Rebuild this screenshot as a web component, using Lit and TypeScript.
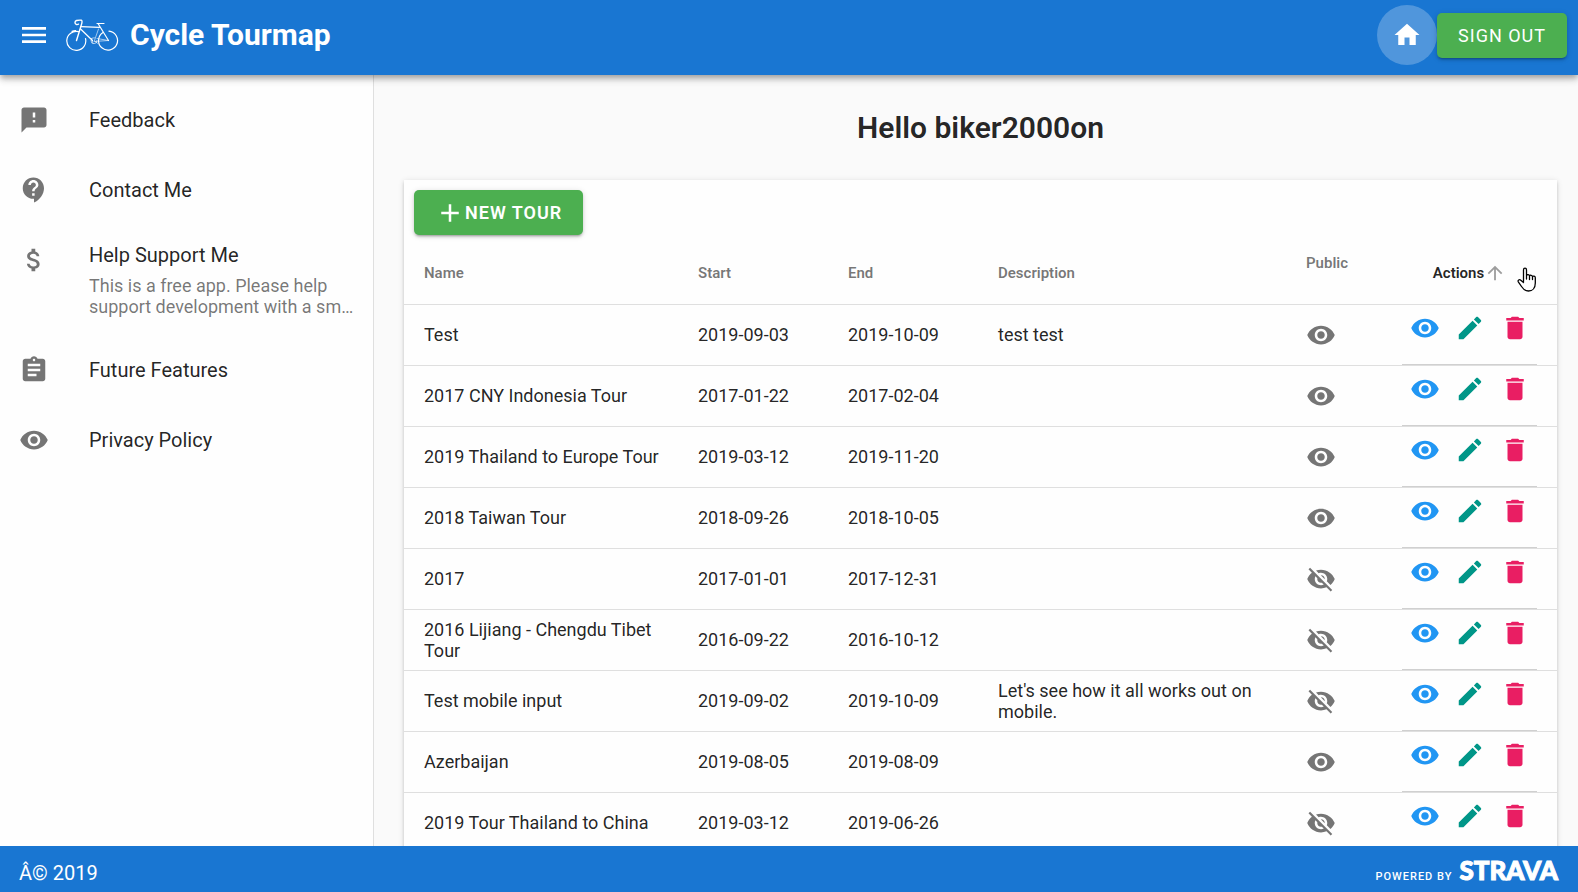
import { LitElement, html, css, svg } from "lit";
import { customElement, property } from "lit/decorators.js";

const ICONS: Record<string, string> = {
  menu: "M3 18h18v-2H3v2zm0-5h18v-2H3v2zm0-7v2h18V6H3z",
  home: "M10 20v-6h4v6h5v-8h3L12 3 2 12h3v8z",
  feedback:
    "M20 2H4c-1.1 0-1.99.9-1.99 2L2 22l4-4h14c1.1 0 2-.9 2-2V4c0-1.1-.9-2-2-2zm-7 12h-2v-2h2v2zm0-4h-2V6h2v4z",
  contact:
    "M11.5 2C6.81 2 3 5.81 3 10.5S6.81 19 11.5 19h.5v3c4.86-2.34 8-7 8-11.5C20 5.81 16.19 2 11.5 2zm1 14.5h-2v-2h2v2zm0-3.5h-2c0-3.25 3-3 3-5 0-1.100-.9-2-2-2s-2 .9-2 2h-2c0-2.210 1.790-4 4-4s4 1.790 4 4c0 2.500-3 2.750-3 5z",
  money:
    "M11.8 10.9c-2.27-.59-3-1.200-3-2.150 0-1.090 1.010-1.850 2.700-1.850 1.780 0 2.440.85 2.500 2.100h2.210c-.07-1.720-1.120-3.300-3.210-3.810V3h-3v2.160c-1.940.42-3.500 1.680-3.500 3.610 0 2.310 1.910 3.460 4.700 4.130 2.500.6 3 1.480 3 2.410 0 .69-.49 1.790-2.700 1.790-2.060 0-2.870-.92-2.980-2.100h-2.200c.12 2.190 1.760 3.420 3.680 3.830V21h3v-2.150c1.950-.37 3.500-1.500 3.500-3.550 0-2.840-2.430-3.810-4.700-4.400z",
  assignment:
    "M19 3h-4.180C14.400 1.840 13.300 1 12 1c-1.300 0-2.400.84-2.820 2H5c-1.100 0-2 .9-2 2v14c0 1.100.9 2 2 2h14c1.100 0 2-.9 2-2V5c0-1.100-.9-2-2-2zm-7 0c.55 0 1 .45 1 1s-.45 1-1 1-1-.45-1-1 .45-1 1-1zm2 14H7v-2h7v2zm3-4H7v-2h10v2zm0-4H7V7h10v2z",
  eye: "M12 4.500C7 4.500 2.730 7.610 1 12c1.730 4.390 6 7.500 11 7.500s9.270-3.110 11-7.500c-1.730-4.390-6-7.500-11-7.500zM12 17c-2.760 0-5-2.240-5-5s2.240-5 5-5 5 2.240 5 5-2.240 5-5 5zm0-8c-1.660 0-3 1.340-3 3s1.340 3 3 3 3-1.340 3-3-1.340-3-3-3z",
  eyeOff:
    "M12 7c2.760 0 5 2.240 5 5 0 .65-.13 1.260-.36 1.830l2.920 2.920c1.510-1.260 2.700-2.890 3.430-4.750-1.730-4.390-6-7.500-11-7.500-1.400 0-2.740.25-3.980.7l2.160 2.160C10.740 7.130 11.350 7 12 7zM2 4.270l2.280 2.280.46.46C3.080 8.300 1.780 10.020 1 12c1.730 4.390 6 7.500 11 7.500 1.550 0 3.030-.3 4.380-.84l.42.42L19.730 22 21 20.730 3.270 3 2 4.270zM7.530 9.800l1.550 1.550c-.05.21-.08.43-.08.65 0 1.660 1.340 3 3 3 .22 0 .44-.03.65-.08l1.550 1.550c-.67.33-1.410.53-2.200.53-2.760 0-5-2.240-5-5 0-.79.2-1.530.53-2.200zm4.310-.78l3.150 3.150.02-.16c0-1.660-1.340-3-3-3l-.17.01z",
  edit: "M3 17.250V21h3.750L17.810 9.940l-3.750-3.750L3 17.250zM20.710 7.040c.39-.39.39-1.020 0-1.410l-2.340-2.340c-.39-.39-1.020-.39-1.410 0l-1.830 1.830 3.750 3.750 1.830-1.830z",
  trash: "M6 19c0 1.100.9 2 2 2h8c1.100 0 2-.9 2-2V7H6v12zM19 4h-3.500l-1-1h-5l-1 1H5v2h14V4z",
  plus: "M19 13h-6v6h-2v-6H5v-2h6V5h2v6h6v2z",
  arrowUp: "M4 12l1.410 1.410L11 7.830V20h2V7.830l5.580 5.590L20 12l-8-8-8 8z",
};

@customElement("md-icon")
class MdIcon extends LitElement {
  @property() name = "";

  static styles = css`
    :host {
      display: inline-flex;
      flex: none;
      width: 30px;
      height: 30px;
    }
    .glyph {
      width: 100%;
      height: 100%;
      fill: currentColor;
    }
  `;

  render() {
    return html`<svg class="glyph" viewBox="0 0 24 24" aria-hidden="true">
      ${svg`<path d=${ICONS[this.name] ?? ""}></path>`}
    </svg>`;
  }
}

interface NavItem {
  icon: string;
  title: string;
  note?: string;
}

const NAV: NavItem[] = [
  { icon: "feedback", title: "Feedback" },
  { icon: "contact", title: "Contact Me" },
  {
    icon: "money",
    title: "Help Support Me",
    note: "This is a free app. Please help support development with a sm…",
  },
  { icon: "assignment", title: "Future Features" },
  { icon: "eye", title: "Privacy Policy" },
];

interface Tour {
  name: string;
  start: string;
  end: string;
  description: string;
  isPublic: boolean;
}

const tour = (name: string, start: string, end: string, isPublic: boolean, description = ""): Tour => ({
  name,
  start,
  end,
  description,
  isPublic,
});

const TOURS: Tour[] = [
  tour("Test", "2019-09-03", "2019-10-09", true, "test test"),
  tour("2017 CNY Indonesia Tour", "2017-01-22", "2017-02-04", true),
  tour("2019 Thailand to Europe Tour", "2019-03-12", "2019-11-20", true),
  tour("2018 Taiwan Tour", "2018-09-26", "2018-10-05", true),
  tour("2017", "2017-01-01", "2017-12-31", false),
  tour("2016 Lijiang - Chengdu Tibet Tour", "2016-09-22", "2016-10-12", false),
  tour("Test mobile input", "2019-09-02", "2019-10-09", false, "Let's see how it all works out on mobile."),
  tour("Azerbaijan", "2019-08-05", "2019-08-09", true),
  tour("2019 Tour Thailand to China", "2019-03-12", "2019-06-26", false),
];

@customElement("app-root")
class AppRoot extends LitElement {
  static styles = css`
    :host {
      display: grid;
      grid-template-rows: auto minmax(0, 1fr) auto;
      height: 100vh;
      font-family: Roboto, sans-serif;
      color: rgba(0, 0, 0, 0.87);
      background: #fafafa;
    }
    * {
      box-sizing: border-box;
    }
    button {
      font: inherit;
      border: 0;
      margin: 0;
      padding: 0;
      background: none;
      color: inherit;
      cursor: pointer;
    }

    .bar {
      display: flex;
      align-items: center;
      height: 75px;
      padding: 0 11px 5px 18px;
      background: #1976d2;
      color: #fff;
      z-index: 2;
      box-shadow: 0 3px 5px -1px rgba(0, 0, 0, 0.2), 0 5px 6px rgba(0, 0, 0, 0.14),
        0 1px 12px rgba(0, 0, 0, 0.12);
    }
    .menu {
      display: flex;
    }
    .menu md-icon {
      width: 32px;
      height: 32px;
    }
    .bike {
      width: 54px;
      height: 33px;
      margin-left: 15px;
      fill: none;
      stroke: #fff;
      stroke-linecap: round;
      stroke-linejoin: round;
    }
    .brand {
      margin: 0 auto 0 11px;
      font-size: 30px;
      line-height: 40px;
      font-weight: 700;
    }
    .home {
      display: flex;
      align-items: center;
      justify-content: center;
      width: 60px;
      height: 60px;
      border-radius: 50%;
      color: #fff;
      background: rgba(255, 255, 255, 0.24);
    }
    .green {
      display: inline-flex;
      align-items: center;
      height: 45px;
      padding: 0 21px;
      border-radius: 5px;
      background: #4caf50;
      color: #fff;
      font-size: 18px;
      font-weight: 600;
      letter-spacing: 1px;
      text-transform: uppercase;
      box-shadow: 0 3px 2px -2px rgba(0, 0, 0, 0.2), 0 2px 3px rgba(0, 0, 0, 0.14),
        0 1px 6px rgba(0, 0, 0, 0.12);
    }
    .light {
      font-weight: 400;
    }

    .body {
      display: grid;
      grid-template-columns: 374px minmax(0, 1fr);
      min-height: 0;
    }
    .side {
      padding-top: 10px;
      background: #fefefe;
      border-right: 1px solid rgba(0, 0, 0, 0.12);
    }
    .item {
      display: flex;
      align-items: center;
      gap: 40px;
      min-height: 70px;
      padding: 0 10px 0 19px;
      color: inherit;
      text-decoration: none;
    }
    .item md-icon {
      color: #757575;
    }
    .tall {
      align-items: flex-start;
      height: 110px;
      padding-top: 18px;
    }
    .tall md-icon {
      margin-top: 2px;
    }
    .label {
      display: block;
      font-size: 20px;
      line-height: 24px;
    }
    .note {
      display: block;
      margin-top: 8px;
      font-size: 18px;
      line-height: 21px;
      color: rgba(0, 0, 0, 0.54);
    }

    .main {
      overflow: hidden auto;
      scrollbar-width: none;
      padding: 31px 21px 0 30px;
    }
    .hello {
      margin: 0 0 30px;
      font-size: 30px;
      line-height: 44px;
      font-weight: 600;
      text-align: center;
    }
    .card {
      background: #fefefe;
      box-shadow: 0 3px 2px -2px rgba(0, 0, 0, 0.2), 0 2px 3px rgba(0, 0, 0, 0.14),
        0 1px 6px rgba(0, 0, 0, 0.12);
    }
    .tools {
      display: flex;
      padding: 10px 10px 7px;
    }
    .tours {
      width: 100%;
      table-layout: fixed;
      border-collapse: separate;
      border-spacing: 0;
    }
    .c-name {
      width: 274px;
    }
    .c-date {
      width: 150px;
    }
    .c-public {
      width: 96px;
    }
    .c-actions {
      width: 175px;
    }
    th {
      height: 63px;
      padding: 0 20px;
      border-bottom: 1px solid rgba(0, 0, 0, 0.12);
      font-size: 15px;
      line-height: 20px;
      font-weight: 600;
      text-align: left;
      color: rgba(0, 0, 0, 0.54);
    }
    .h-public {
      padding-bottom: 20px;
    }
    .h-actions {
      position: relative;
      text-align: center;
      color: rgba(0, 0, 0, 0.87);
    }
    .sort {
      display: flex;
      align-items: center;
      justify-content: center;
      width: 100%;
    }
    .sort md-icon {
      width: 22px;
      height: 22px;
      color: rgba(0, 0, 0, 0.38);
    }
    .pointer {
      position: absolute;
      right: 20px;
      top: 25px;
      width: 20px;
      height: 25px;
    }
    td {
      height: 61px;
      padding: 0 10px 1px 20px;
      border-bottom: 1px solid rgba(0, 0, 0, 0.12);
      font-size: 18px;
      line-height: 21px;
    }
    .seen,
    .last {
      padding: 0 20px;
    }
    .seen md-icon {
      display: flex;
      color: #757575;
    }
    .acts {
      display: flex;
      height: 60px;
      border-bottom: 1px solid rgba(0, 0, 0, 0.18);
    }
    .act {
      display: flex;
      align-items: center;
      justify-content: center;
      width: 45px;
      height: 46px;
    }
    .view {
      color: #2196f3;
    }
    .edit {
      color: #009688;
    }
    .drop {
      color: #e91e63;
    }

    .foot {
      display: flex;
      align-items: center;
      justify-content: space-between;
      height: 46px;
      padding: 8px 20px 0 19px;
      background: #1976d2;
      color: #fff;
      font-size: 20px;
      line-height: 28px;
      z-index: 1;
    }
    .strava {
      display: flex;
      align-items: baseline;
      gap: 7px;
      color: #fff;
      text-decoration: none;
    }
    .by {
      font-size: 11px;
      font-weight: 500;
      letter-spacing: 1px;
    }
    .mark {
      font-family: Lato, sans-serif;
      font-size: 26px;
      font-weight: 900;
      -webkit-text-stroke: 1px #fff;
    }
  `;

  private bike() {
    return html`<svg class="bike" viewBox="0 0 54 33" aria-hidden="true">
      <path stroke-width="1.200" d="M13.500 12.600A9.500 9.500 0 1 0 20.500 19.500M10.500 11.700A9.500 9.500 0 0 0 7 12.300M38 13.500A9.500 9.500 0 1 0 44 12.100" />
      <path stroke-width="1.400" d="M10 3.500C10 1.500 12 1 16.500 1.200C17.500 2 17 4 16.300 6L11.500 21.500M10 3.500C10 5.500 12 6 13.500 5.200" />
      <path stroke-width="1.200" d="M16 7.700L34.500 8.300M15.600 10L27.500 21.500M33.300 5L43.500 21.500M32 4.500H39" />
      <path stroke-width=".6" d="M33.500 10L29.500 21.500M43.500 21.500L29 22.500M43.500 21.500L32 19.500M26.500 19.500L28 24.500M32 21.500A3 3 0 1 1 29.500 18.700M30 22.500L33 24.500" />
    </svg>`;
  }

  private navItem(item: NavItem) {
    return html`<a class=${item.note ? "item tall" : "item"} href="#">
      <md-icon name=${item.icon}></md-icon>
      <span>
        <span class="label">${item.title}</span>
        ${item.note ? html`<span class="note">${item.note}</span>` : ""}
      </span>
    </a>`;
  }

  private row(t: Tour) {
    return html`<tr>
      <td>${t.name}</td>
      <td>${t.start}</td>
      <td>${t.end}</td>
      <td>${t.description}</td>
      <td class="seen"><md-icon name=${t.isPublic ? "eye" : "eyeOff"}></md-icon></td>
      <td class="last">
        <div class="acts">
          <button class="act view" aria-label="View"><md-icon name="eye"></md-icon></button>
          <button class="act edit" aria-label="Edit"><md-icon name="edit"></md-icon></button>
          <button class="act drop" aria-label="Delete"><md-icon name="trash"></md-icon></button>
        </div>
      </td>
    </tr>`;
  }

  render() {
    return html`
      <header class="bar">
        <button class="menu" aria-label="Menu"><md-icon name="menu"></md-icon></button>
        ${this.bike()}
        <h1 class="brand">Cycle Tourmap</h1>
        <a class="home" href="#" aria-label="Home"><md-icon name="home"></md-icon></a>
        <button class="green light">Sign out</button>
      </header>
      <div class="body">
        <nav class="side">${NAV.map((item) => this.navItem(item))}</nav>
        <main class="main">
          <h2 class="hello">Hello biker2000on</h2>
          <section class="card">
            <div class="tools">
              <button class="green"><md-icon name="plus"></md-icon>New tour</button>
            </div>
            <table class="tours">
              <colgroup>
                <col class="c-name" />
                <col class="c-date" />
                <col class="c-date" />
                <col />
                <col class="c-public" />
                <col class="c-actions" />
              </colgroup>
              <thead>
                <tr>
                  <th>Name</th>
                  <th>Start</th>
                  <th>End</th>
                  <th>Description</th>
                  <th class="h-public">Public</th>
                  <th class="h-actions">
                    <button class="sort">Actions<md-icon name="arrowUp"></md-icon></button>
                    <svg class="pointer" viewBox="0 0 20 25" aria-hidden="true">
                      <path
                        fill="#fff"
                        stroke="#000"
                        stroke-width="1.300"
                        stroke-linejoin="round"
                        stroke-linecap="round"
                        d="M6.500 14.500V3C6.500.6 9.500.6 9.500 3V8.500C10 7 12.500 7.400 12.500 9C13 7.700 15.500 8.100 15.500 9.800C16 8.600 18.300 9 18.300 10.800V16C18.300 21 15.500 24 11.500 24C8 24 6.500 22.500 4.500 19.500L1.300 14.800C.5 13.300 2.300 12 3.800 13.200L6.500 15.500M9.500 8.500V12M12.500 9V12.500M15.500 9.800V12.500"
                      />
                    </svg>
                  </th>
                </tr>
              </thead>
              <tbody>
                ${TOURS.map((t) => this.row(t))}
              </tbody>
            </table>
          </section>
        </main>
      </div>
      <footer class="foot">
        <span>Â© 2019</span>
        <a class="strava" href="#"><span class="by">POWERED BY</span><span class="mark">STRAVA</span></a>
      </footer>
    `;
  }
}
